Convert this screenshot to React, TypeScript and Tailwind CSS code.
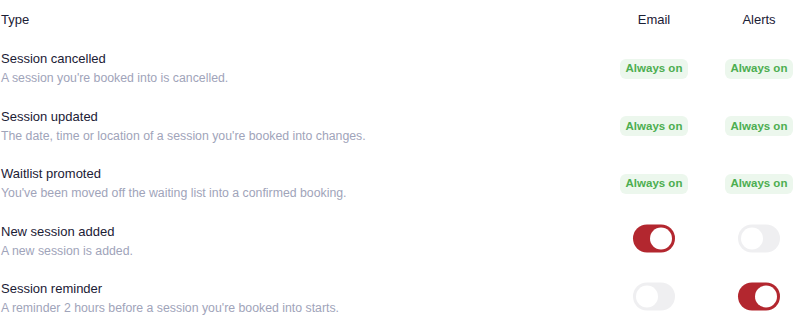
import React, { useState } from 'react';

type Pref = {
    id: string;
    title: string;
    description: string;
    locked: boolean;
    email: boolean;
    alerts: boolean;
};

const initialPrefs: Pref[] = [
    { id: 'cancelled', title: 'Session cancelled', description: "A session you're booked into is cancelled.", locked: true, email: true, alerts: true },
    { id: 'updated', title: 'Session updated', description: "The date, time or location of a session you're booked into changes.", locked: true, email: true, alerts: true },
    { id: 'waitlist', title: 'Waitlist promoted', description: "You've been moved off the waiting list into a confirmed booking.", locked: true, email: true, alerts: true },
    { id: 'added', title: 'New session added', description: 'A new session is added.', locked: false, email: true, alerts: false },
    { id: 'reminder', title: 'Session reminder', description: "A reminder 2 hours before a session you're booked into starts.", locked: false, email: false, alerts: true },
];

const AlwaysOn = () => (
    <span className="inline-flex items-center h-5 px-[6px] rounded-md bg-[#ecf7ed] text-[#4cae50] text-[11.5px] font-bold leading-none">
        Always on
    </span>
);

const Toggle: React.FC<{ on: boolean; onChange: () => void }> = ({ on, onChange }) => (
    <button
        type="button"
        onClick={onChange}
        className={`relative -translate-y-[2.5px] w-[42px] h-[28px] rounded-full p-[3px] flex transition ${on ? 'bg-[#b3272f] justify-end' : 'bg-[#efeff1] justify-start'}`}
    >
        <span className="block w-[22px] h-[22px] rounded-full bg-white" />
    </button>
);

export default function App() {
    const [prefs, setPrefs] = useState<Pref[]>(initialPrefs);

    const toggle = (id: string, key: 'email' | 'alerts') => {
        setPrefs(prev => prev.map(p => (p.id === id ? { ...p, [key]: !p[key] } : p)));
    };

    return (
        <div className="w-[804px] h-[328px] bg-white overflow-hidden font-['Liberation_Sans',Arial,sans-serif] text-[#1b2035]">
            <div className="grid grid-cols-[1fr_120px_90px] h-[39px] items-center text-[13px]">
                <span className="pl-px">Type</span>
                <span className="text-center">Email</span>
                <span className="text-center">Alerts</span>
            </div>
            <div className="pt-px">
                {prefs.map(p => (
                    <div key={p.id} className="grid grid-cols-[1fr_120px_90px] h-[57.5px] items-center">
                        <div className="pl-px">
                            <p className="text-[13px] leading-[19px]">{p.title}</p>
                            <p className="mt-px text-[12.3px] leading-[19px] text-[#9fa4ba]">{p.description}</p>
                        </div>
                        <div className="flex justify-center">
                            {p.locked ? <AlwaysOn /> : <Toggle on={p.email} onChange={() => toggle(p.id, 'email')} />}
                        </div>
                        <div className="flex justify-center">
                            {p.locked ? <AlwaysOn /> : <Toggle on={p.alerts} onChange={() => toggle(p.id, 'alerts')} />}
                        </div>
                    </div>
                ))}
            </div>
        </div>
    );
}
